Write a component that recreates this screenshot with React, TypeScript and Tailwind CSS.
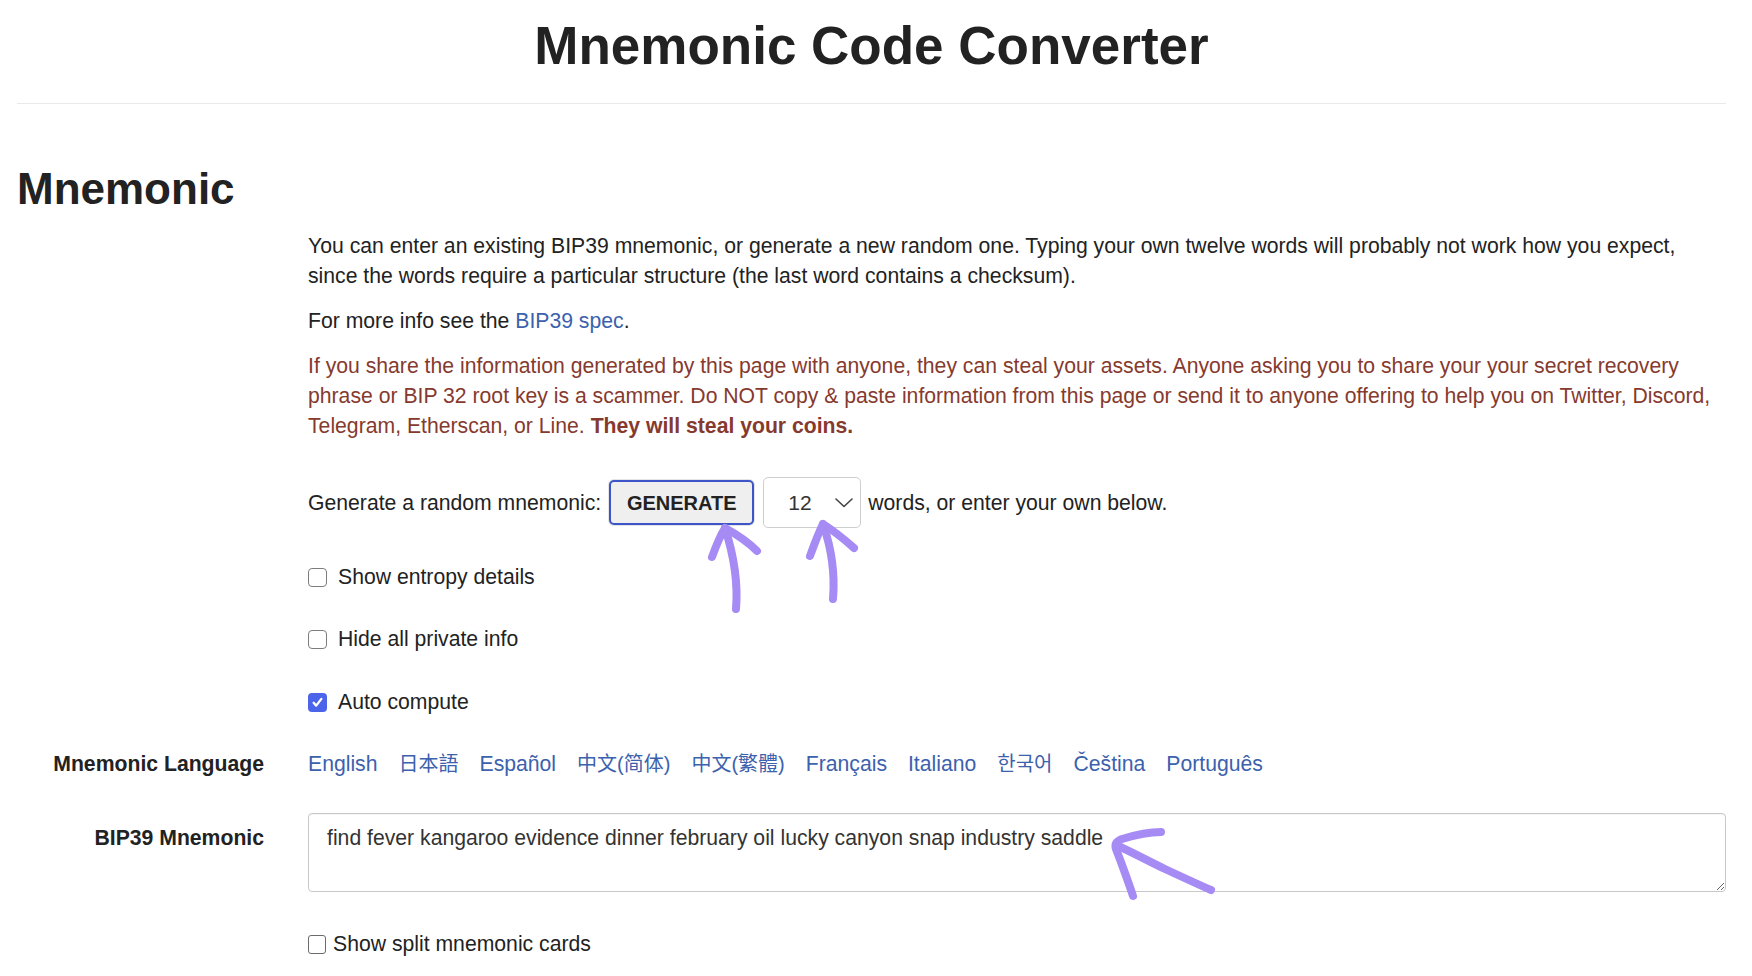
import React from "react";

const langs = [
  { t: "English" },
  { t: "日本語", cjk: true },
  { t: "Español" },
  { t: "中文(简体)", cjk: true },
  { t: "中文(繁體)", cjk: true },
  { t: "Français" },
  { t: "Italiano" },
  { t: "한국어", cjk: true },
  { t: "Čeština" },
  { t: "Português" },
];

function Box({ checked, old }: { checked?: boolean; old?: boolean }) {
  if (checked) {
    return (
      <span className="w-[19px] h-[19px] shrink-0 rounded-[4px] bg-[#4b64e9] flex items-center justify-center">
        <svg width="13" height="13" viewBox="0 0 13 13">
          <path d="M2.6 6.8 L5.2 9.6 L10.4 2.9" fill="none" stroke="#fff" strokeWidth="2.3" strokeLinecap="round" strokeLinejoin="round" />
        </svg>
      </span>
    );
  }
  if (old) {
    return <span className="w-[18px] h-[19px] shrink-0 rounded-[3px] border-[1.5px] border-[#6b6b6b] bg-white" />;
  }
  return <span className="w-[19px] h-[19px] shrink-0 rounded-[4px] border-[1.5px] border-[#7d7d7d] bg-white" />;
}

function Row({ label, className, children }: { label?: string; className?: string; children: React.ReactNode }) {
  return (
    <div className={"grid grid-cols-[247px_1fr] gap-x-[44px] " + (className || "")}>
      <div className="text-right font-bold">{label}</div>
      <div>{children}</div>
    </div>
  );
}

export default function App() {
  return (
    <div className="relative w-full min-h-[976px] bg-white text-[#222] text-[21.2px] leading-[30px] font-['Liberation_Sans','Noto_Sans_CJK_SC','Noto_Sans_CJK_KR',Arial,sans-serif] overflow-hidden">
      <div className="pl-[17px] pr-[26px]">
        {/* Page title */}
        <h1 className="pt-[16px] text-center text-[53px] leading-[60px] font-bold">Mnemonic Code Converter</h1>
        <div className="mt-[27px] h-px bg-[#e9e9e9]" />

        <h2 className="mt-[60px] text-[44px] leading-[50px] font-bold">Mnemonic</h2>

        <Row className="mt-[17px]">
          <p className="mb-[15px] whitespace-nowrap">
            You can enter an existing BIP39 mnemonic, or generate a new random one. Typing your own twelve words will probably not work how you expect,
            <br />
            since the words require a particular structure (the last word contains a checksum).
          </p>
          <p className="mb-[15px] whitespace-nowrap">
            For more info see the <a className="text-[#3c61ad]">BIP39 spec</a>.
          </p>
          <p className="whitespace-nowrap text-[#863a2e]">
            If you share the information generated by this page with anyone, they can steal your assets. Anyone asking you to share your your secret recovery
            <br />
            phrase or BIP 32 root key is a scammer. Do NOT copy &amp; paste information from this page or send it to anyone offering to help you on Twitter, Discord,
            <br />
            Telegram, Etherscan, or Line. <strong className="font-bold">They will steal your coins.</strong>
          </p>
        </Row>

        {/* Generate controls */}
        <Row className="mt-[36px]">
          <div className="flex items-center h-[51px]">
            <span>Generate a random mnemonic:</span>
            <button className="ml-[8px] w-[145px] h-[45px] rounded-[5px] border-2 border-[#3d55c9] bg-[#efefef] text-[20px] font-bold text-[#222] shadow-[0_0_0_1px_#e4e4e4]">
              GENERATE
            </button>
            <div className="ml-[9px] w-[98px] h-[51px] rounded-[5px] border border-[#cfcfcf] bg-white flex items-center justify-between pl-[24px] pr-[7px]">
              <span className="text-[21px] text-[#333]">12</span>
              <svg width="18" height="10" viewBox="0 0 18 10">
                <path d="M1 1 L9 8.5 L17 1" fill="none" stroke="#444" strokeWidth="1.6" strokeLinecap="round" strokeLinejoin="round" />
              </svg>
            </div>
            <span className="ml-[7px]">words, or enter your own below.</span>
          </div>
        </Row>

        <Row className="mt-[34px]">
          <label className="flex items-center gap-[11px] h-[30px]">
            <Box />
            <span>Show entropy details</span>
          </label>
        </Row>
        <Row className="mt-[32px]">
          <label className="flex items-center gap-[11px] h-[30px]">
            <Box />
            <span>Hide all private info</span>
          </label>
        </Row>
        <Row className="mt-[33px]">
          <label className="flex items-center gap-[11px] h-[30px]">
            <Box checked />
            <span>Auto compute</span>
          </label>
        </Row>

        <Row label="Mnemonic Language" className="mt-[32px]">
          <div className="flex items-baseline gap-[21px] text-[#3c61ad]">
            {langs.map((l) => (
              <a key={l.t} className={l.cjk ? "text-[20px]" : ""}>
                {l.t}
              </a>
            ))}
          </div>
        </Row>

        <Row label="BIP39 Mnemonic" className="mt-[34px] [&>div:first-child]:pt-[10px]">
          <textarea
            readOnly
            defaultValue="find fever kangaroo evidence dinner february oil lucky canyon snap industry saddle"
            className="block w-full h-[79px] rounded-[4px] border border-[#c8c8c8] bg-white px-[18px] pt-[9px] text-[21.2px] leading-[30px] text-[#333] outline-none resize-y shadow-[inset_0_1px_1px_rgba(0,0,0,0.05)]"
          />
        </Row>

        <Row className="mt-[37px]">
          <label className="flex items-center gap-[7px] h-[30px]">
            <Box old />
            <span>Show split mnemonic cards</span>
          </label>
        </Row>
      </div>

      {/* hand-drawn annotation arrows */}
      <svg className="absolute left-0 top-0 pointer-events-none" width="1752" height="976" viewBox="0 0 1752 976">
        <g fill="none" stroke="#a68bf4" strokeWidth="8" strokeLinecap="round" strokeLinejoin="round">
          <path d="M736 609 C738 585 734 556 725 528" />
          <path d="M712 557 C716 546 720 536 725 528 C736 534 748 542 757 551" />
          <path d="M833 599 C835 575 831 547 823 524" />
          <path d="M810 556 C814 545 818 534 823 524 C834 531 845 540 854 548" />
          <path d="M1211 890 C1195 883 1180 876 1165 869 C1148 861 1132 852 1118 846" />
          <path d="M1133 896 C1127 878 1121 862 1116 849 C1114 843 1117 841 1122 839 C1135 835 1148 832 1161 832" />
        </g>
      </svg>
    </div>
  );
}
